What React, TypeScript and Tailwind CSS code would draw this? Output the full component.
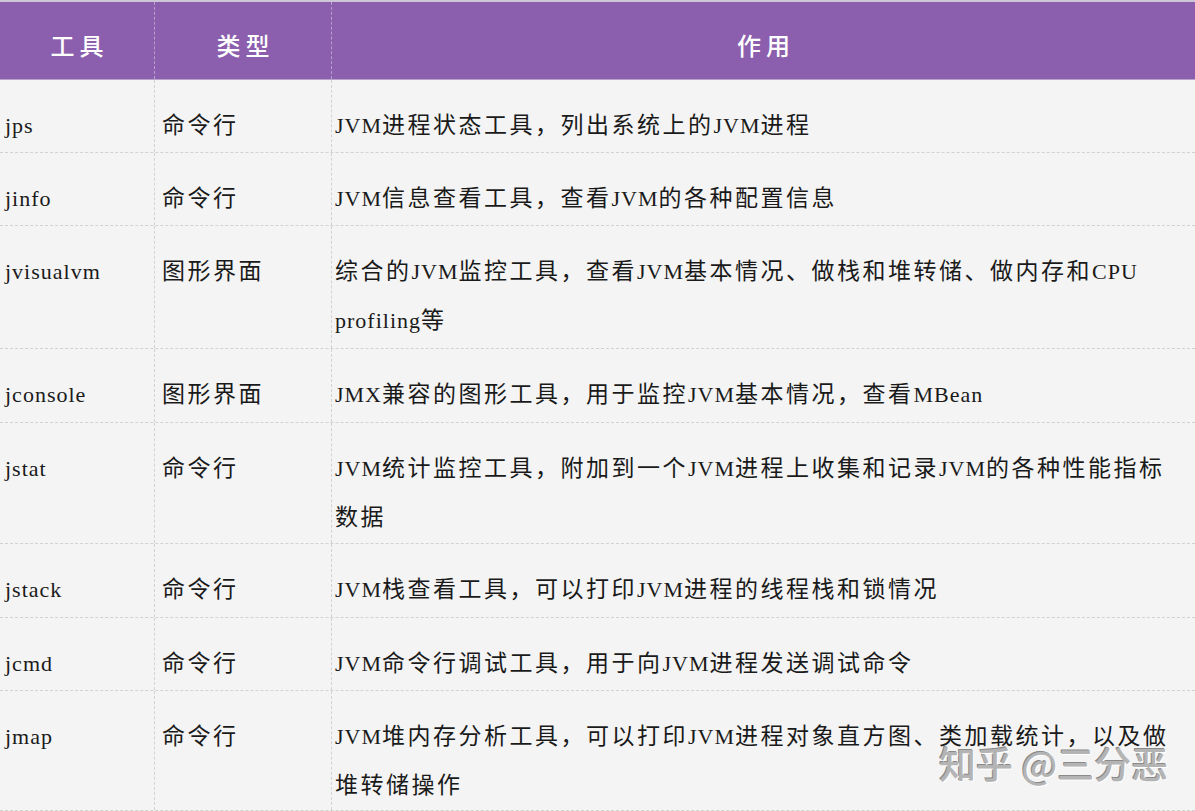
import React from "react";

const rows: { tool: string; type: string; lines: string[]; h: string }[] = [
  { tool: "jps", type: "命令行", lines: ["JVM进程状态工具，列出系统上的JVM进程"], h: "h-[73px]" },
  { tool: "jinfo", type: "命令行", lines: ["JVM信息查看工具，查看JVM的各种配置信息"], h: "h-[73px]" },
  {
    tool: "jvisualvm",
    type: "图形界面",
    lines: ["综合的JVM监控工具，查看JVM基本情况、做栈和堆转储、做内存和CPU", "profiling等"],
    h: "h-[123px]",
  },
  { tool: "jconsole", type: "图形界面", lines: ["JMX兼容的图形工具，用于监控JVM基本情况，查看MBean"], h: "h-[74px]" },
  {
    tool: "jstat",
    type: "命令行",
    lines: ["JVM统计监控工具，附加到一个JVM进程上收集和记录JVM的各种性能指标", "数据"],
    h: "h-[121px]",
  },
  { tool: "jstack", type: "命令行", lines: ["JVM栈查看工具，可以打印JVM进程的线程栈和锁情况"], h: "h-[74px]" },
  { tool: "jcmd", type: "命令行", lines: ["JVM命令行调试工具，用于向JVM进程发送调试命令"], h: "h-[73px]" },
  {
    tool: "jmap",
    type: "命令行",
    lines: ["JVM堆内存分析工具，可以打印JVM进程对象直方图、类加载统计，以及做", "堆转储操作"],
    h: "h-[120px]",
  },
];

function Mixed({ text }: { text: string }) {
  const parts = text.match(/[A-Za-z0-9]+|[^A-Za-z0-9]+/g) || [];
  return (
    <>
      {parts.map((p, i) =>
        /^[A-Za-z0-9]+$/.test(p) ? (
          <span key={i} className="text-[22px] tracking-[1px]">
            {p}
          </span>
        ) : (
          <span key={i} className="text-[23px] tracking-[2.5px]">
            {p}
          </span>
        )
      )}
    </>
  );
}

const font = "font-['Liberation_Serif','Noto_Sans_CJK_SC',serif]";

export default function App() {
  return (
    <div className={`relative w-[1195px] h-[811px] overflow-hidden bg-[#f4f4f4] text-[#1a1a1a] ${font}`}>
      <div className="h-[2px] bg-[#cdc6d6]" />
      <div className="grid grid-cols-[155px_177px_1fr] h-[78px] bg-[#8b5fae] text-white text-[24px] tracking-[5px] font-medium border-b border-[#b9a2cc]">
        <div className="flex items-center justify-center pt-[12px] pl-[5px] border-r border-dashed border-[#b8a0cc]">工具</div>
        <div className="flex items-center justify-center pt-[12px] pl-[5px] border-r border-dashed border-[#b8a0cc]">类型</div>
        <div className="flex items-center justify-center pt-[12px] pl-[5px]">作用</div>
      </div>
      {rows.map((r, i) => (
        <div
          key={i}
          className={`grid grid-cols-[155px_177px_1fr] ${r.h} border-b border-dashed border-[#d2d2d2] leading-[47px]`}
        >
          <div className="pl-[5px] pt-[22px] border-r border-dashed border-[#d2d2d2] whitespace-nowrap">
            <Mixed text={r.tool} />
          </div>
          <div className="pl-[7px] pt-[22px] border-r border-dashed border-[#d2d2d2] whitespace-nowrap">
            <Mixed text={r.type} />
          </div>
          <div className="pl-[3px] pt-[22px] whitespace-nowrap overflow-hidden">
            {r.lines.map((l, j) => (
              <div key={j}>
                <Mixed text={l} />
              </div>
            ))}
          </div>
        </div>
      ))}
      <div className="absolute left-[939px] top-[741px] text-[37px] leading-[44px] font-['Noto_Sans_CJK_SC',sans-serif] font-medium text-[#b4b4b4] [text-shadow:1px_1px_0_#ffffff,-1px_-1px_0_#8a8a8a] whitespace-nowrap">
        知乎 @三分恶
      </div>
    </div>
  );
}
